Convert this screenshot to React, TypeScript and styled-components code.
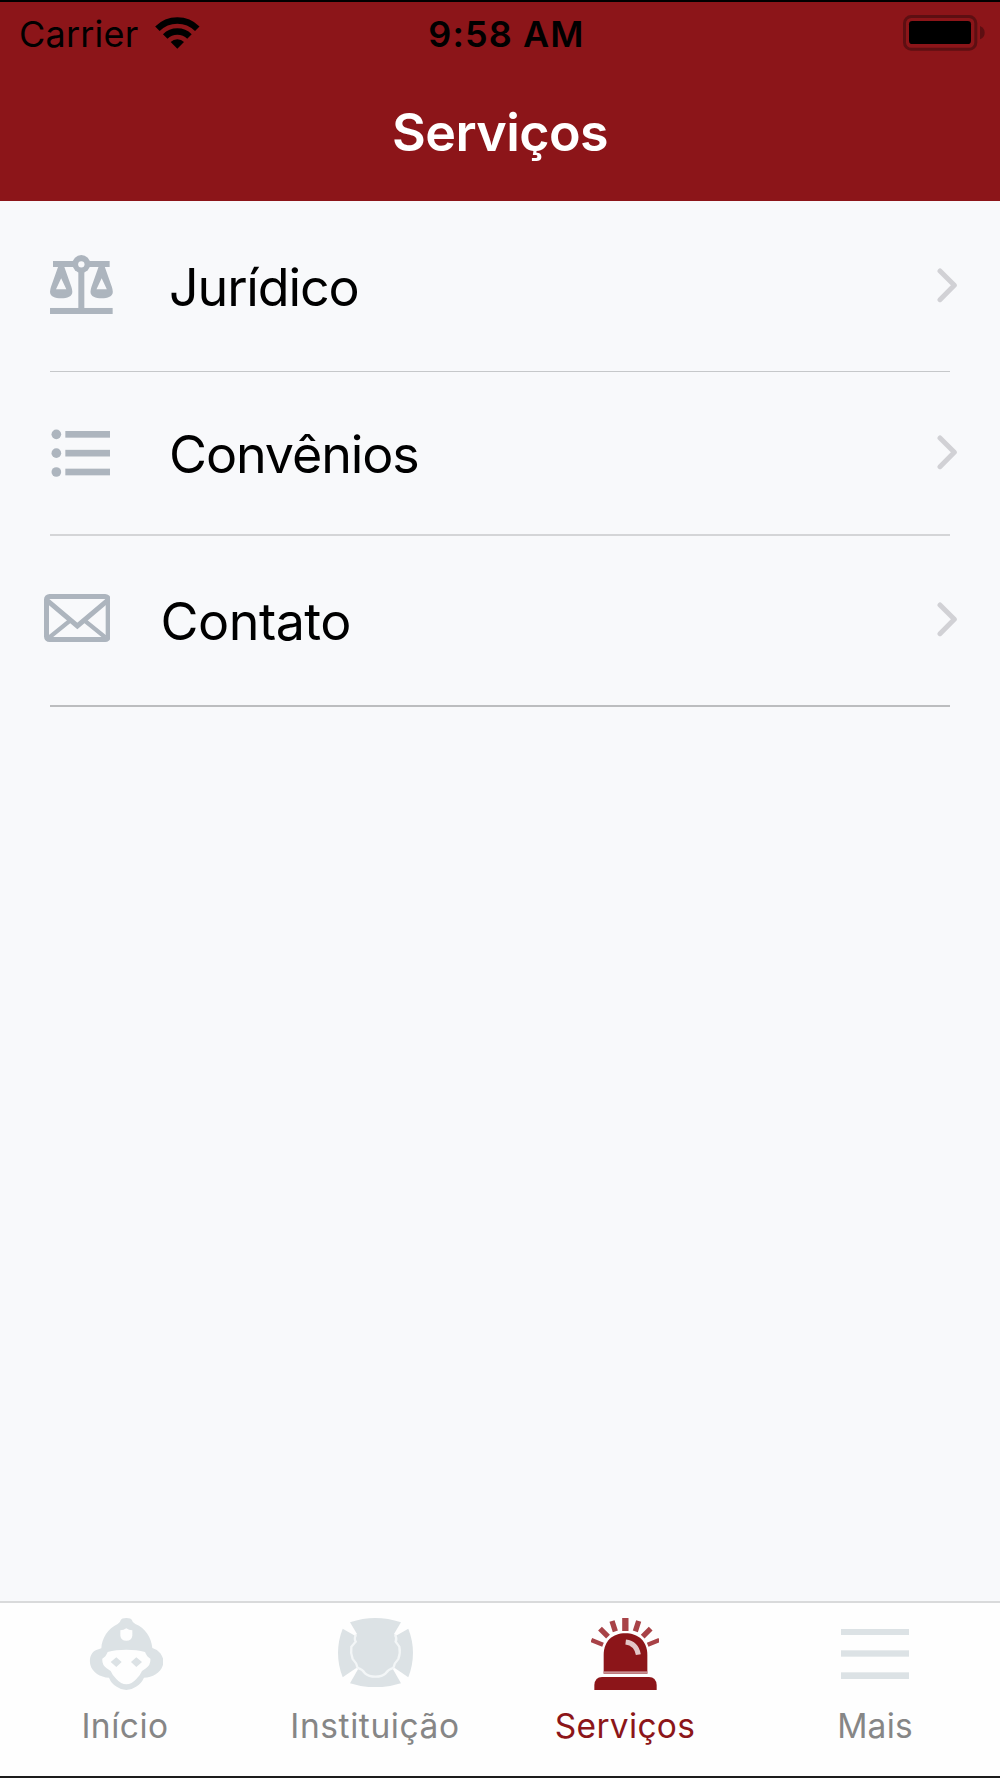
import React from "react";
import styled, { createGlobalStyle } from "styled-components";

const red = "#8c1519";
const iconGray = "#adb5be";
const tabGray = "#dce2e5";

const GlobalStyle = createGlobalStyle`
  body { margin: 0; background: #000; }
  * { box-sizing: border-box; }
  svg { display: block; flex: none; }
`;

const Screen = styled.div`
  display: flex;
  flex-direction: column;
  width: 1000px;
  height: 1778px;
  border-top: 2px solid #000;
  border-bottom: 2px solid #1c1c1c;
  background: #f8f9fb;
  font-family: Inter, "Liberation Sans", sans-serif;
  overflow: hidden;
`;

const Header = styled.header`
  height: 199px;
  background: ${red};
`;

const StatusBar = styled.div`
  display: grid;
  grid-template-columns: 1fr auto 1fr;
  align-items: center;
  height: 64px;
  padding: 0 15px 0 19px;
  font-size: 36px;
  line-height: 64px;
  color: #000;
`;

const Carrier = styled.div`
  display: flex;
  align-items: center;
  gap: 17px;
  letter-spacing: 0.2px;

  svg { margin-bottom: 2px; }
`;

const Clock = styled.div`
  font-weight: 600;
  letter-spacing: 1.1px;
  margin-left: 9px;
`;

const BatterySlot = styled.div`
  display: flex;
  justify-content: flex-end;
  margin-bottom: 2px;
`;

const Title = styled.h1`
  margin: 35px 0 0;
  font-size: 52px;
  font-weight: 600;
  line-height: 63px;
  letter-spacing: -0.6px;
  text-align: center;
  color: #fff;
`;

const List = styled.main`
  flex: 1;
  padding: 0 50px;
`;

const Row = styled.div<{ $height: number; $line: string }>`
  display: flex;
  align-items: center;
  height: ${(p) => p.$height}px;
  border-bottom: ${(p) => p.$line};
`;

const IconSlot = styled.div<{ $shift: number; $lift: number; $width: number }>`
  width: ${(p) => p.$width}px;
  margin-left: ${(p) => p.$shift}px;
  margin-bottom: ${(p) => p.$lift}px;
`;

const RowLabel = styled.div<{ $spacing: number; $drop: number }>`
  flex: 1;
  padding-top: ${(p) => p.$drop}px;
  font-size: 52px;
  line-height: 64px;
  letter-spacing: ${(p) => p.$spacing}px;
  color: #000;
`;

const ChevronSlot = styled.div`
  margin: 0 -7.5px 2px 0;
`;

const TabBar = styled.nav`
  display: grid;
  grid-template-columns: repeat(4, 1fr);
  height: 175px;
  border-top: 2px solid #d9dadb;
  background: #fefefe;
`;

const Tab = styled.div<{ $active?: boolean }>`
  display: flex;
  flex-direction: column;
  align-items: center;
  padding-top: 15px;
  color: ${(p) => (p.$active ? red : "#868686")};
`;

const TabIcon = styled.div<{ $shift: number }>`
  display: flex;
  height: 72px;
  margin-bottom: 16px;
  padding-left: ${(p) => p.$shift}px;
`;

const TabLabel = styled.div<{ $spacing: number }>`
  font-size: 33.5px;
  line-height: 40px;
  letter-spacing: ${(p) => p.$spacing}px;
`;

const Wifi = () => (
  <svg width="44.7" height="32" viewBox="468 50 134 96">
    <g fill="none" stroke="#000" strokeWidth="19">
      <path d="M475.2 85.2A84.5 84.5 0 0 1 594.8 85.2" />
      <path d="M498.6 108.6A51.5 51.5 0 0 1 571.4 108.6" />
    </g>
    <path d="M535 145L515 125A28 28 0 0 1 555 125Z" fill="#000" />
  </svg>
);

const Battery = () => (
  <svg width="82" height="36" viewBox="69 45 246 108">
    <rect x="73.5" y="49.5" width="214" height="98" rx="20" fill="none" stroke="#5d0f12" strokeWidth="9" />
    <rect x="87" y="63" width="186" height="69" rx="10" fill="#000" />
    <path d="M300 78Q314 84 314 98T300 118Z" fill="#5d0f12" />
  </svg>
);

const Scales = () => (
  <svg width="63" height="59.3" viewBox="60 74 189 178" fill={iconGray}>
    <rect x="69" y="92" width="170" height="18" />
    <rect x="145" y="110" width="18" height="126" />
    <rect x="60" y="233" width="188" height="19" />
    <circle cx="154" cy="101" r="27" />
    <circle cx="154" cy="102" r="9.5" fill="#f8f9fb" />
    {[0, 121.5].map((dx) => (
      <path
        key={dx}
        transform={`translate(${dx})`}
        fillRule="evenodd"
        d="M84 110H103L124 169Q127 178 127 184C127 198 112 204 93.5 204S60 198 60 184Q60 178 63 169ZM93.5 144L78 177H109Z"
      />
    ))}
  </svg>
);

const Bullets = () => (
  <svg width="60" height="48" viewBox="60 88 180 144" fill={iconGray}>
    {[104, 160.5, 217].map((y) => (
      <g key={y}>
        <circle cx="79" cy={y} r="14.5" />
        <rect x="106" y={y - 10} width="134" height="20" />
      </g>
    ))}
  </svg>
);

const Envelope = () => (
  <svg width="66.7" height="48" viewBox="40 72 200 144" fill="none" stroke={iconGray}>
    <rect x="47.5" y="79.5" width="185" height="129" rx="9" strokeWidth="15" />
    <path d="M50 92L140 168L230 92" strokeWidth="15" />
    <path d="M119 151L56 202M161 151L224 202" strokeWidth="13" />
  </svg>
);

const Chevron = () => (
  <svg width="20.7" height="35" viewBox="109 82 62 105">
    <path d="M118 91L161 134L118 177" fill="none" stroke="#d1d1d5" strokeWidth="15" strokeLinecap="round" strokeLinejoin="round" />
  </svg>
);

const Firefighter = () => (
  <svg width="74" height="72" viewBox="86 84 222 216" fill={tabGray}>
    <path
      fillRule="evenodd"
      d="M181 91Q184 84 198 84Q212 84 215 91Q216 98 225 102C256 115 273 143 276 174Q291 178 300 190C309 203 312 214 307 227C301 248 276 262 251 263Q243 281 227 290Q213 300 198 300Q183 300 169 290Q153 281 146 263C120 262 95 246 90 224C86 207 91 187 108 180L123 175C124 145 143 115 172 102Q180 98 181 91Z
         M180 121V137Q182 152 198 152Q214 152 216 137V121Q206 121 198 115Q190 121 180 121Z
         M142 186Q136 201 126 206Q124 225 139 235L151 243Q157 257 168 267Q182 283 198 283Q214 283 228 267Q239 257 245 243L257 235Q272 225 270 206Q260 201 254 186Q230 179 198 179Q166 179 142 186Z"
    />
    <path d="M151 216L168 202L184 216L168 231ZM212 216L228 202L245 216L228 231Z" />
  </svg>
);

const MalteseCross = () => (
  <svg width="75" height="69.3" viewBox="202 86 225 208">
    <path
      fill={tabGray}
      d="M238 99Q276 86 314 86Q352 86 391 99L370 134L376 139L413 118Q427 154 427 190Q427 228 413 264L371 235L367 240L391 282Q352 294 314 294Q276 294 238 282L262 240L258 235L216 264Q202 228 202 190Q202 154 216 118L253 139L259 134Z"
    />
    <path
      fill="none"
      stroke="#f3f6f7"
      strokeWidth="7"
      d="M256 137Q249 148 255 157L242 172Q239 190 246 209Q258 221 261 236Q275 240 283 252Q294 262 314 262Q335 262 345 252Q354 240 368 236Q371 221 383 209Q390 190 386 172L375 157Q380 148 373 137"
    />
  </svg>
);

const Siren = () => (
  <svg width="68.7" height="72" viewBox="152 84 206 216">
    <path d="M190 251V195C190 153 217 130 255 130S321 153 321 195V251Z" fill={red} />
    <rect x="190" y="244" width="131" height="7" fill="#c88e91" />
    <path d="M162 300V285Q164 261 185 261H326Q347 261 349 285V300Z" fill={red} />
    <path d="M256 156Q288 160 294 194" fill="none" stroke="#e3c6c7" strokeWidth="15" />
    <g fill="none" stroke="#a84247" strokeWidth="16">
      <path d="M255 84V123" strokeWidth="19" />
      <path d="M215 93L225 124M295 93L285 124" />
      <path d="M179 116L203 140M331 116L307 140" />
      <path d="M153 150L188 164M357 150L322 164" strokeWidth="13" />
    </g>
  </svg>
);

const Menu = () => (
  <svg width="68.3" height="72" viewBox="122 84 205 216" fill={tabGray}>
    <rect x="122" y="117" width="205" height="18" />
    <rect x="122" y="181" width="205" height="19" />
    <rect x="122" y="247" width="205" height="20" />
  </svg>
);

const rows = [
  { label: "Jurídico", icon: <Scales />, height: 171, line: "1px solid #c6c8ca", shift: 0, lift: 3, width: 119, spacing: -1.15, drop: 4 },
  { label: "Convênios", icon: <Bullets />, height: 164, line: "2px solid #d4d5d7", shift: 0, lift: 0, width: 119, spacing: -1.1, drop: 4 },
  { label: "Contato", icon: <Envelope />, height: 171, line: "2px solid #bcbdbf", shift: -6.5, lift: 5, width: 117, spacing: -0.5, drop: 2 },
];

const tabs = [
  { label: "Início", icon: <Firefighter />, spacing: 0.5, shift: 2 },
  { label: "Instituição", icon: <MalteseCross />, spacing: 0.6, shift: 0 },
  { label: "Serviços", icon: <Siren />, spacing: 0.3, active: true, shift: 0 },
  { label: "Mais", icon: <Menu />, spacing: 0.2, shift: 0 },
];

export default function App() {
  return (
    <>
      <GlobalStyle />
      <Screen>
        <Header>
          <StatusBar>
            <Carrier>
              Carrier
              <Wifi />
            </Carrier>
            <Clock>9:58 AM</Clock>
            <BatterySlot>
              <Battery />
            </BatterySlot>
          </StatusBar>
          <Title>Serviços</Title>
        </Header>
        <List>
          {rows.map((r) => (
            <Row key={r.label} $height={r.height} $line={r.line}>
              <IconSlot $shift={r.shift} $lift={r.lift} $width={r.width}>
                {r.icon}
              </IconSlot>
              <RowLabel $spacing={r.spacing} $drop={r.drop}>
                {r.label}
              </RowLabel>
              <ChevronSlot>
                <Chevron />
              </ChevronSlot>
            </Row>
          ))}
        </List>
        <TabBar>
          {tabs.map((t) => (
            <Tab key={t.label} $active={t.active}>
              <TabIcon $shift={t.shift}>{t.icon}</TabIcon>
              <TabLabel $spacing={t.spacing}>{t.label}</TabLabel>
            </Tab>
          ))}
        </TabBar>
      </Screen>
    </>
  );
}
